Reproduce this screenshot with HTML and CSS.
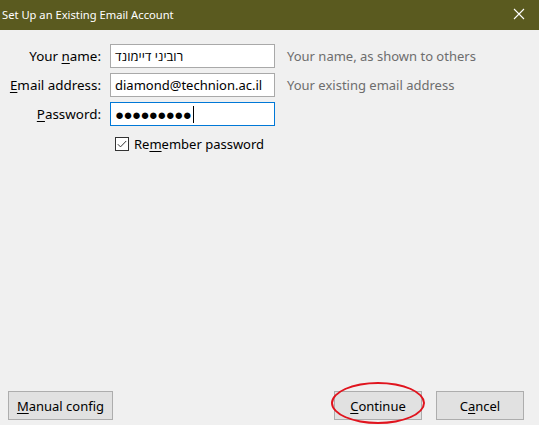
FILE: index.html
```html
<!DOCTYPE html>
<html>
  <head>
    <title>Set Up an Existing Email Account</title>
    <link rel="stylesheet" href="styles.css">
  </head>
  <body>
    <div id="titlebar">
      <span class="title">Set Up an Existing Email Account</span>
      <svg class="close" viewBox="0 0 12 12"><path d="M1 1L11 11M11 1L1 11" stroke="#fff" stroke-width="1.1" fill="none"/></svg>
    </div>
    <div id="dialog">
      <div class="form">
        <label class="label">Your <u>n</u>ame:</label>
        <div class="field"><span dir="rtl">רוביני דיימונד</span></div>
        <div class="hint">Your name, as shown to others</div>

        <label class="label"><u>E</u>mail address:</label>
        <div class="field">diamond@technion.ac.il</div>
        <div class="hint">Your existing email address</div>

        <label class="label"><u>P</u>assword:</label>
        <div class="field focus"><span class="dots">●●●●●●●●●</span><span class="caret"></span></div>
        <div class="hint"></div>

        <div></div>
        <div class="check">
          <svg class="box" viewBox="0 0 14 14"><rect x="0.5" y="0.5" width="13" height="13" fill="#fff" stroke="#333"/><path d="M2.8 7.2L5.5 9.9L11.2 4" stroke="#333" stroke-width="1" fill="none"/></svg>
          <span>Re<u>m</u>ember password</span>
        </div>
      </div>
      <div class="buttons">
        <button class="btn manual"><u>M</u>anual config</button>
        <div class="right">
          <div class="mark"><button class="btn"><u>C</u>ontinue</button></div>
          <button class="btn">C<u>a</u>ncel</button>
        </div>
      </div>
    </div>
  </body>
</html>
```

FILE: styles.css
```css
html, body {margin:0; height:100%;}
body {background:#f0f0f0; font-family:"Noto Sans","Open Sans",sans-serif; font-size:13px; color:#000; display:flex; flex-direction:column; overflow:hidden;}
u {text-decoration:underline; text-underline-offset:2px;}

#titlebar {height:30px; box-sizing:border-box; padding:0 14px 2px 2px; background:#5a5a1f; color:#fff; display:flex; align-items:center; justify-content:space-between; font-size:11.2px;}
#titlebar .close {width:12px; height:12px;}

#dialog {flex:1; display:flex; flex-direction:column; padding:13px 15px 5px 8px;}
.form {display:grid; grid-template-columns:93px 165px auto; column-gap:9px; row-gap:5px; align-items:center; margin-top:1px;}
.label {text-align:right; white-space:nowrap; font-size:13.4px;}
.field {height:24px; box-sizing:border-box; border:1px solid #a9a9a9; background:#fff; padding:0 4px; display:flex; align-items:center; white-space:nowrap; overflow:hidden;}
.field.focus {border-color:#0078d7;}
.dots {font-size:15px; letter-spacing:-0.6px;}
.caret {width:1px; height:17px; background:#000; margin-left:2px;}
.hint {color:#6d6d6d; padding-left:3px; white-space:nowrap;}
.check {display:flex; align-items:center; gap:5px; padding:4px 0 0 5px;}
.check .box {width:14px; height:14px;}

.buttons {margin-top:auto; display:flex; justify-content:space-between; align-items:flex-end;}
.right {display:flex; gap:14px;}
.btn {font:inherit; height:29px; background:#e1e1e1; border:1px solid #adadad; padding:0 6px; color:#000;}
.btn.manual {width:105px;}
.right .btn {width:88px;}
.mark {position:relative;}
.mark:after {content:""; position:absolute; left:-3px; right:-3px; top:-9px; bottom:-4px; border:2px solid #e0141e; border-radius:50%;}
```
